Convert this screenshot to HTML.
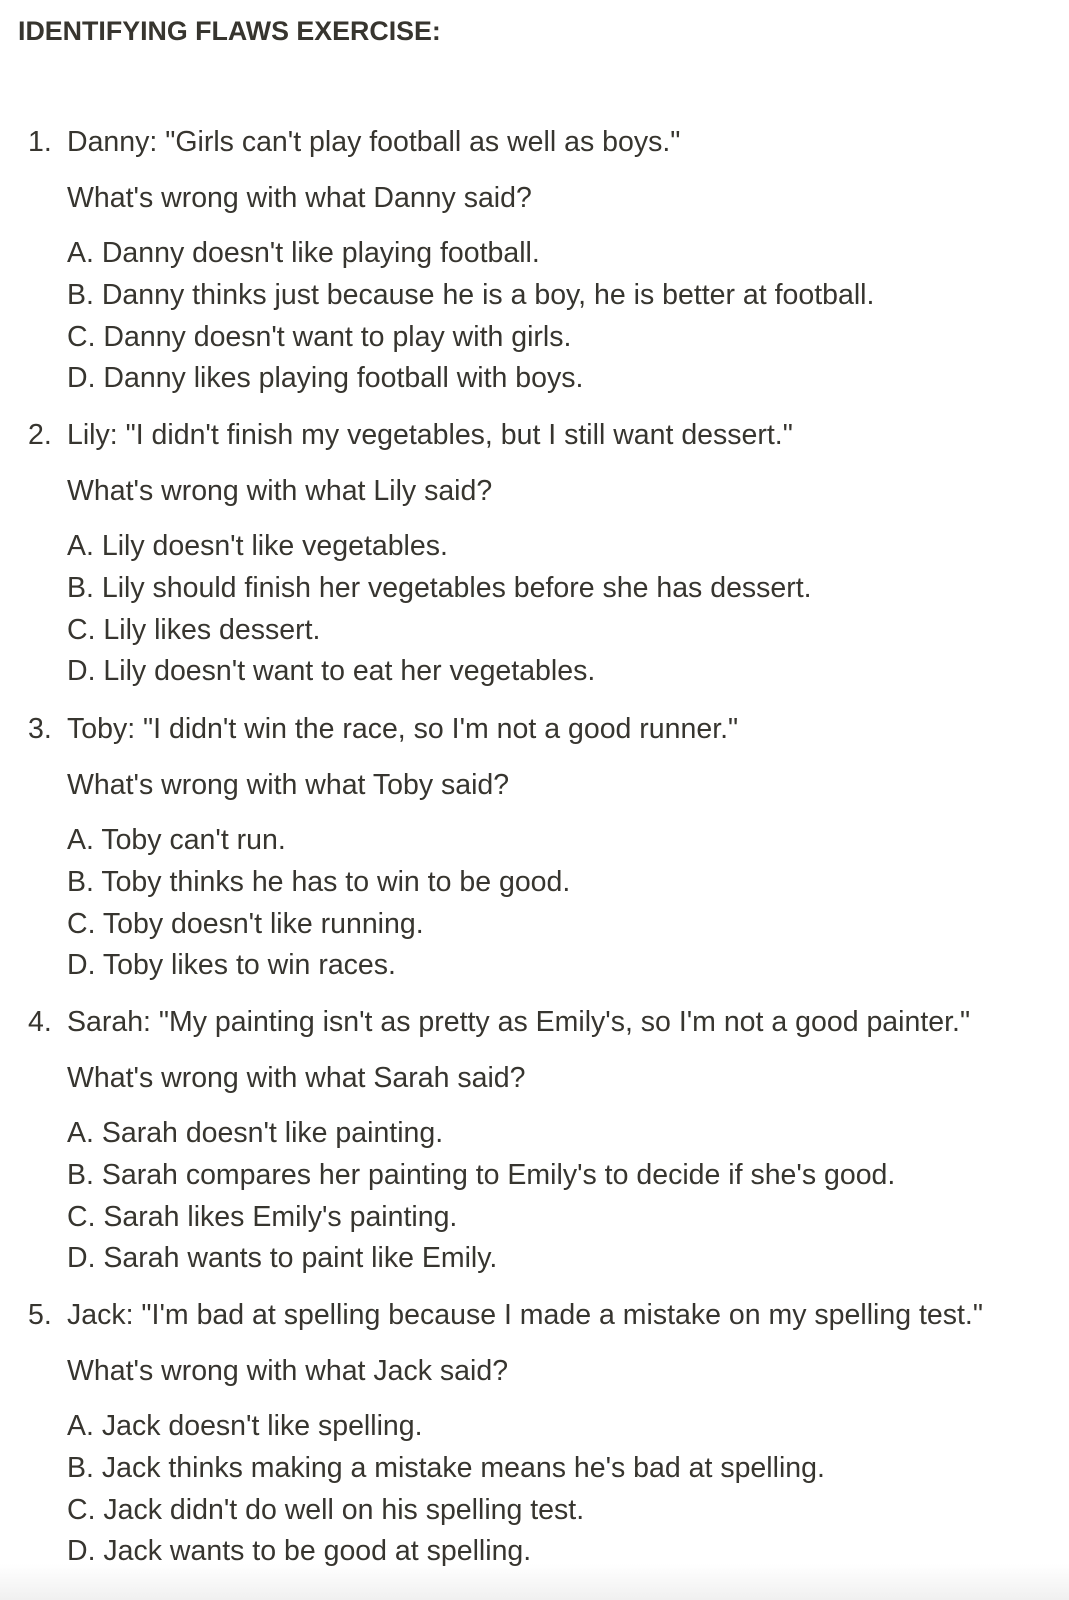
<!DOCTYPE html>
<html><head><meta charset="utf-8"><style>
html,body{margin:0;padding:0;background:#fff;}
body{width:1069px;height:1600px;position:relative;overflow:hidden;font-family:"Liberation Sans",Arial,sans-serif;color:#37352f;}
.l{position:absolute;font-size:28.5px;line-height:40px;white-space:nowrap;z-index:2;}
.h{position:absolute;left:18px;top:11px;font-size:26.8px;font-weight:bold;line-height:40px;}
.fade{position:absolute;left:0;right:0;bottom:0;height:36px;background:linear-gradient(rgba(241,241,241,0),#f0f0f0);z-index:1;}
</style></head><body>
<div class="h">IDENTIFYING FLAWS EXERCISE:</div>

<div class="l" style="left:28px;top:122px">1.</div>
<div class="l" style="left:67px;top:122px">Danny: "Girls can't play football as well as boys."</div>
<div class="l" style="left:67px;top:178px">What's wrong with what Danny said?</div>
<div class="l" style="left:67px;top:233px">A. Danny doesn't like playing football.</div>
<div class="l" style="left:67px;top:275px">B. Danny thinks just because he is a boy, he is better at football.</div>
<div class="l" style="left:67px;top:317px">C. Danny doesn't want to play with girls.</div>
<div class="l" style="left:67px;top:358px">D. Danny likes playing football with boys.</div>

<div class="l" style="left:28px;top:415px">2.</div>
<div class="l" style="left:67px;top:415px">Lily: "I didn't finish my vegetables, but I still want dessert."</div>
<div class="l" style="left:67px;top:471px">What's wrong with what Lily said?</div>
<div class="l" style="left:67px;top:526px">A. Lily doesn't like vegetables.</div>
<div class="l" style="left:67px;top:568px">B. Lily should finish her vegetables before she has dessert.</div>
<div class="l" style="left:67px;top:610px">C. Lily likes dessert.</div>
<div class="l" style="left:67px;top:651px">D. Lily doesn't want to eat her vegetables.</div>

<div class="l" style="left:28px;top:709px">3.</div>
<div class="l" style="left:67px;top:709px">Toby: "I didn't win the race, so I'm not a good runner."</div>
<div class="l" style="left:67px;top:765px">What's wrong with what Toby said?</div>
<div class="l" style="left:67px;top:820px">A. Toby can't run.</div>
<div class="l" style="left:67px;top:862px">B. Toby thinks he has to win to be good.</div>
<div class="l" style="left:67px;top:904px">C. Toby doesn't like running.</div>
<div class="l" style="left:67px;top:945px">D. Toby likes to win races.</div>

<div class="l" style="left:28px;top:1002px">4.</div>
<div class="l" style="left:67px;top:1002px">Sarah: "My painting isn't as pretty as Emily's, so I'm not a good painter."</div>
<div class="l" style="left:67px;top:1058px">What's wrong with what Sarah said?</div>
<div class="l" style="left:67px;top:1113px">A. Sarah doesn't like painting.</div>
<div class="l" style="left:67px;top:1155px">B. Sarah compares her painting to Emily's to decide if she's good.</div>
<div class="l" style="left:67px;top:1197px">C. Sarah likes Emily's painting.</div>
<div class="l" style="left:67px;top:1238px">D. Sarah wants to paint like Emily.</div>

<div class="l" style="left:28px;top:1295px">5.</div>
<div class="l" style="left:67px;top:1295px">Jack: "I'm bad at spelling because I made a mistake on my spelling test."</div>
<div class="l" style="left:67px;top:1351px">What's wrong with what Jack said?</div>
<div class="l" style="left:67px;top:1406px">A. Jack doesn't like spelling.</div>
<div class="l" style="left:67px;top:1448px">B. Jack thinks making a mistake means he's bad at spelling.</div>
<div class="l" style="left:67px;top:1490px">C. Jack didn't do well on his spelling test.</div>
<div class="l" style="left:67px;top:1531px">D. Jack wants to be good at spelling.</div>
<div class="fade"></div>
</body></html>
